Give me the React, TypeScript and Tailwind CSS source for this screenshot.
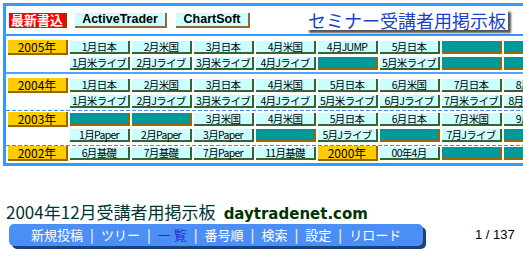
import React from "react";

const T = "__teal";
const Y2000 = "__y2000";

const rows: { year?: string; cells: string[] }[][] = [
  [
    { year: "2005年", cells: ["1月日本", "2月米国", "3月日本", "4月米国", "4月JUMP", "5月日本", T, T] },
    { cells: ["1月米ライブ", "2月Jライブ", "3月米ライブ", "4月Jライブ", T, "5月米ライブ", T, T] },
  ],
  [
    { year: "2004年", cells: ["1月日本", "2月米国", "3月日本", "4月米国", "5月日本", "6月米国", "7月日本", "8月米国"] },
    { cells: ["1月米ライブ", "2月Jライブ", "3月米ライブ", "4月Jライブ", "5月米ライブ", "6月Jライブ", "7月米ライブ", "8月Jライブ"] },
  ],
  [
    { year: "2003年", cells: [T, T, "3月米国", "4月米国", "5月日本", "6月日本", "7月米国", "9月日本"] },
    { cells: ["1月Paper", "2月Paper", "3月Paper", T, "5月Jライブ", T, "7月Jライブ", T] },
  ],
  [
    { year: "2002年", cells: ["6月基礎", "7月基礎", "7月Paper", "11月基礎", Y2000, "00年4月", T, T] },
  ],
];

const jp = "font-['Noto_Sans_CJK_JP',sans-serif]";

function YearCell({ label }: { label: string }) {
  return (
    <div
      className={`w-[60px] h-[15px] shrink-0 bg-[#ffcc00] border-r-2 border-b-2 border-[#996600] flex items-center justify-center text-[12px] leading-[13px] text-black ${jp}`}
    >
      {label}
    </div>
  );
}

function Cell({ label }: { label: string }) {
  if (label === T) {
    return <div className="w-[60px] h-[13px] shrink-0 bg-[#009999] border-r-2 border-b-2 border-[#996600]" />;
  }
  if (label === Y2000) {
    return <YearCell label="2000年" />;
  }
  return (
    <div
      className={`w-[60px] h-[13px] shrink-0 bg-[#ccffff] border-r-2 border-b-2 border-[#336633] flex items-center justify-center text-[10.5px] leading-[11px] tracking-[-0.7px] text-black whitespace-nowrap ${jp}`}
    >
      {label}
    </div>
  );
}

function Row({ year, cells }: { year?: string; cells: string[] }) {
  return (
    <div className="flex items-center h-[15px] gap-[2px] pl-[2px]">
      {year ? <YearCell label={year} /> : <div className="w-[60px] shrink-0" />}
      {cells.map((c, i) => (
        <Cell key={i} label={c} />
      ))}
    </div>
  );
}

const dashed =
  "h-px bg-[repeating-linear-gradient(90deg,#3d8ff0_0px,#3d8ff0_4px,transparent_4px,transparent_6px)]";

export default function App() {
  return (
    <div className="w-[523px] h-[256px] overflow-hidden bg-white relative">
      <div className="pt-[3px] pl-[3px]">
        <div className="w-[600px] border-[3px] border-[#3399ff] border-r-0">
          {/* header */}
          <div className="h-[28px] flex items-center">
            <div
              className={`ml-[3px] w-[58px] h-[15px] bg-[#ff0000] border-r-2 border-b-2 border-[#993300] flex items-center justify-center text-white font-bold text-[13px] leading-[13px] ${jp}`}
            >
              最新書込
            </div>
            <div className="ml-[8px] w-[92px] h-[15px] bg-[#ccffff] border-r-2 border-b-2 border-[#996633] flex items-center justify-center font-['Liberation_Sans',Arial,sans-serif] font-bold text-[12.5px] leading-[13px] text-black">
              ActiveTrader
            </div>
            <div className="ml-[9px] w-[74px] h-[15px] bg-[#ccffff] border-r-2 border-b-2 border-[#996633] flex items-center justify-center font-['Liberation_Sans',Arial,sans-serif] font-bold text-[12.5px] leading-[13px] text-black">
              ChartSoft
            </div>
            <div
              className={`ml-[56px] mt-[-1px] w-[202px] h-[21px] bg-white shadow-[3px_3px_2px_#555555] flex items-center justify-center text-[18px] leading-[20px] text-[#1a3fcc] ${jp}`}
            >
              セミナー受講者用掲示板
            </div>
          </div>
          <div className="h-[2px] bg-[#3399ff]" />

          {/* 2005 */}
          <div className="pt-[4px] flex flex-col gap-[1px]">
            {rows[0].map((r, i) => (
              <Row key={i} {...r} />
            ))}
          </div>
          <div className="h-[2px] mt-[1px] bg-[#4da3ff]" />

          {/* 2004 */}
          <div className="pt-[4px] pb-[1px] flex flex-col gap-[1px]">
            {rows[1].map((r, i) => (
              <Row key={i} {...r} />
            ))}
          </div>
          <div className={dashed} />

          {/* 2003 */}
          <div className="pt-[1px] pb-[2px] flex flex-col gap-[1px]">
            {rows[2].map((r, i) => (
              <Row key={i} {...r} />
            ))}
          </div>
          <div className={dashed} />

          {/* 2002 */}
          <div className="pb-[2px]">
            {rows[3].map((r, i) => (
              <Row key={i} {...r} />
            ))}
          </div>
        </div>
      </div>

      {/* lower title */}
      <div className="mt-[36px] ml-[6px] flex items-baseline h-[20px] leading-[20px] whitespace-nowrap">
        <span className={`text-[17px] text-[#003333] ${jp}`}>2004年12月受講者用掲示板</span>
        <span className="ml-[8px] text-[15px] font-bold text-[#003300] font-['DejaVu_Sans',Verdana,sans-serif]">
          daytradenet.com
        </span>
      </div>

      {/* nav */}
      <div className="mt-[2px] flex items-center">
        <div
          className={`ml-[9px] w-[414px] h-[22px] rounded-[5px] bg-[#4b8ef5] shadow-[3px_3px_0_#1d3f7a] flex items-center pl-[22px] text-[13px] leading-[16px] text-white ${jp} whitespace-nowrap`}
        >
          <span>新規投稿</span>
          <span className="mx-[7px] text-[#e6e6e6] font-bold">|</span>
          <span>ツリー</span>
          <span className="mx-[7px] text-[#e6e6e6] font-bold">|</span>
          <span className="text-[#2b2bd0]">一 覧</span>
          <span className="mx-[7px] text-[#e6e6e6] font-bold">|</span>
          <span>番号順</span>
          <span className="mx-[7px] text-[#e6e6e6] font-bold">|</span>
          <span>検索</span>
          <span className="mx-[7px] text-[#e6e6e6] font-bold">|</span>
          <span>設定</span>
          <span className="mx-[7px] text-[#e6e6e6] font-bold">|</span>
          <span>リロード</span>
        </div>
        <div className="ml-[52px] text-[13px] text-black font-['Liberation_Sans',Arial,sans-serif] whitespace-nowrap">
          1 / 137
        </div>
      </div>
    </div>
  );
}
